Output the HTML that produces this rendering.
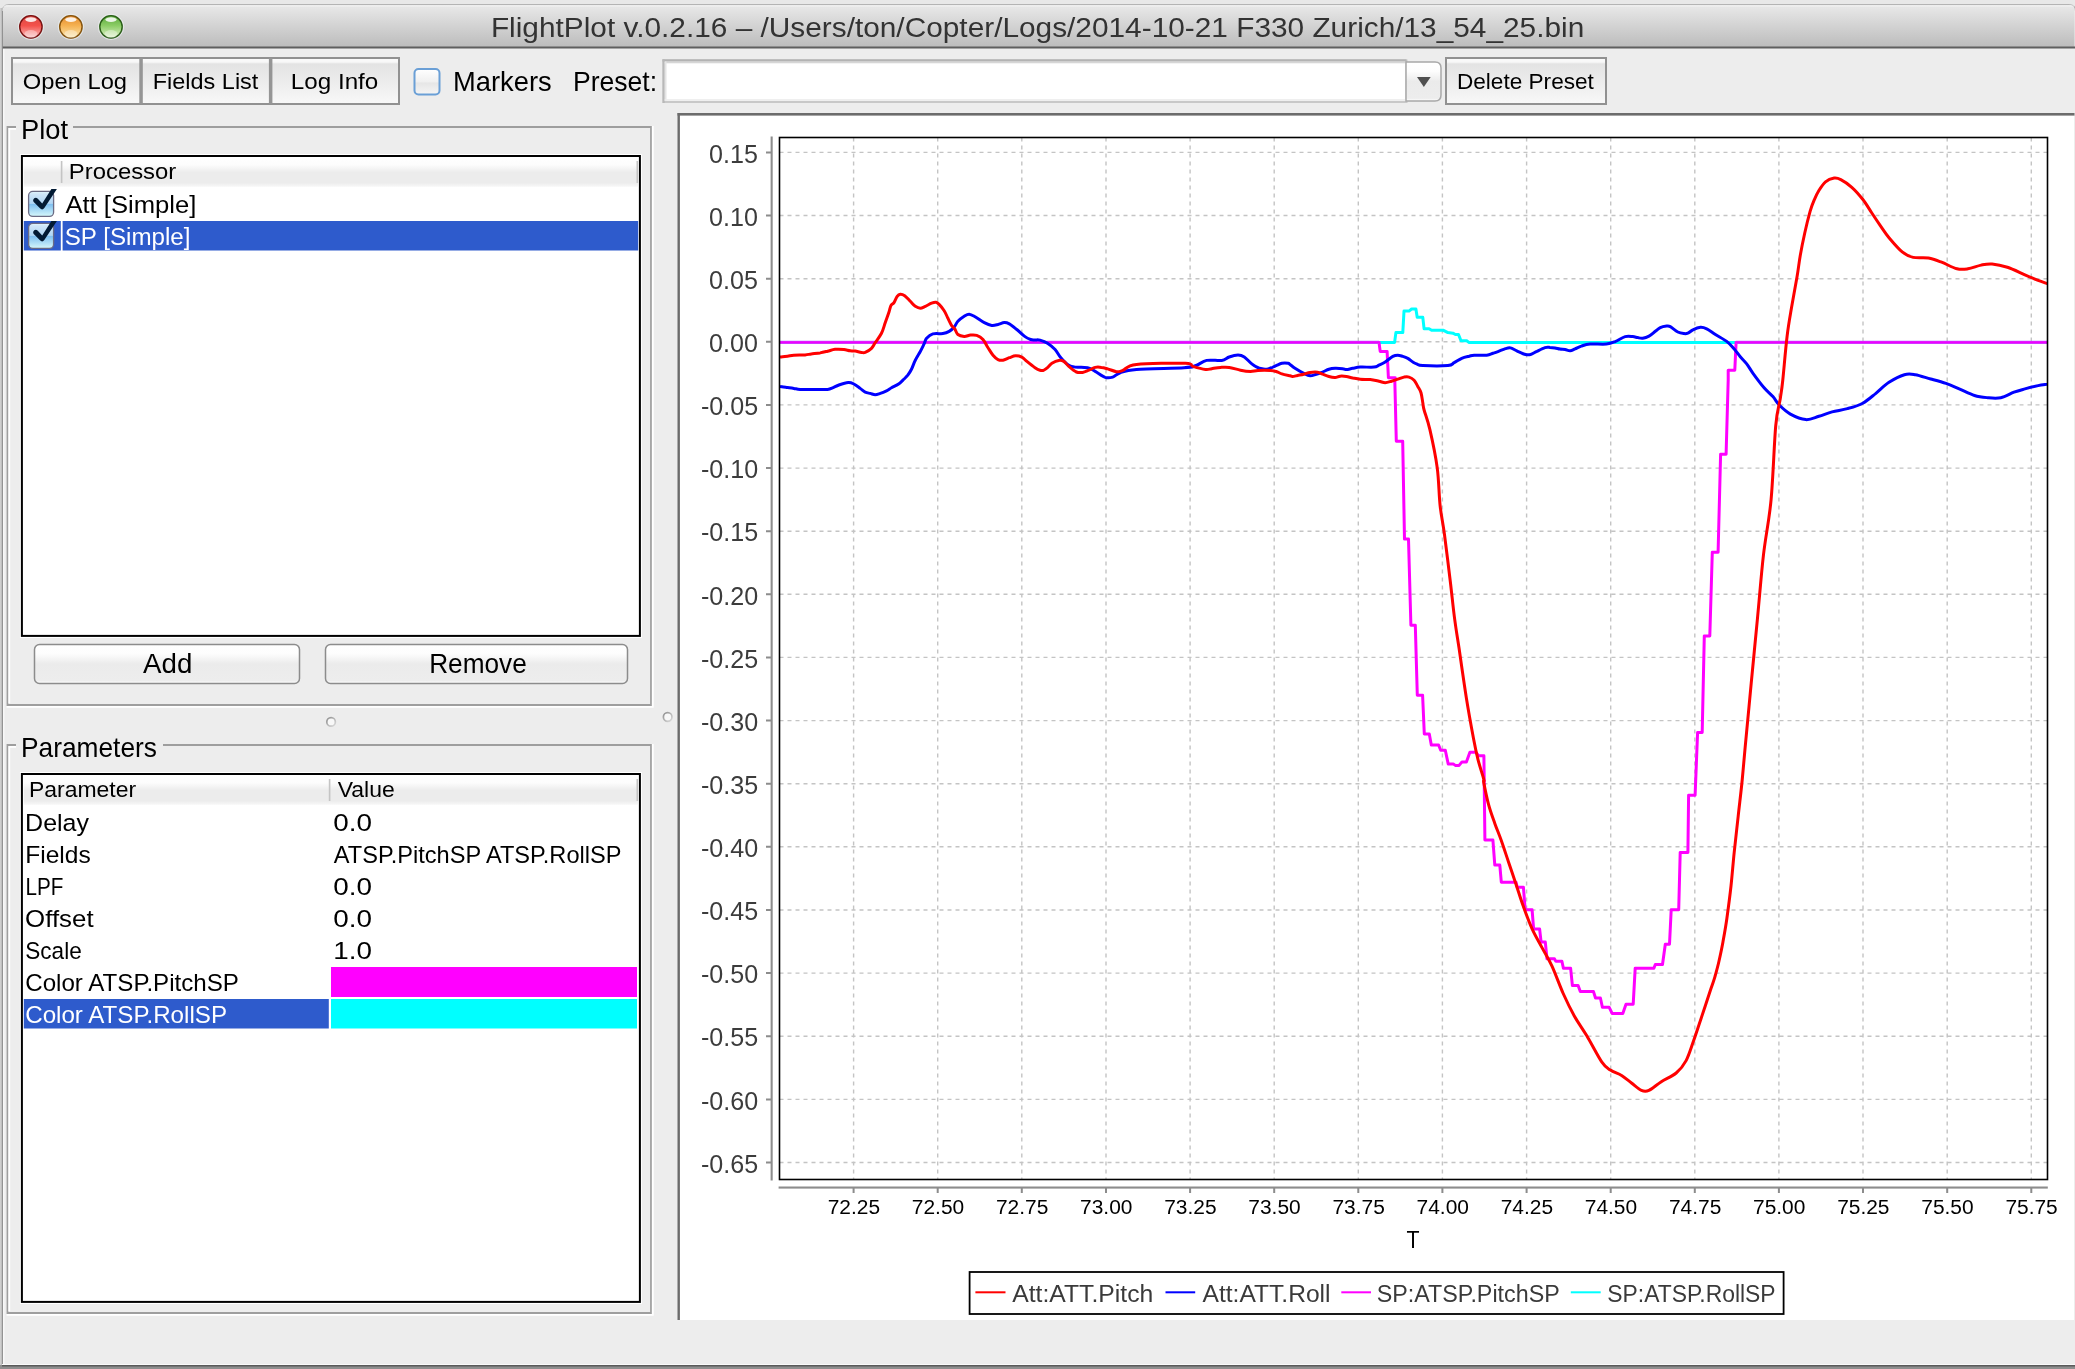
<!DOCTYPE html><html><head><meta charset="utf-8"><style>html,body{margin:0;padding:0;overflow:hidden;background:#e8e8e8}svg{display:block;will-change:transform}text{font-family:"Liberation Sans", sans-serif}</style></head><body>
<svg width="2075" height="1369" viewBox="0 0 2075 1369">
<defs>
<linearGradient id="tb" x1="0" y1="0" x2="0" y2="1"><stop offset="0" stop-color="#e9e9e9"/><stop offset="1" stop-color="#bcbcbc"/></linearGradient>
<linearGradient id="btn" x1="0" y1="0" x2="0" y2="1"><stop offset="0" stop-color="#fcfcfc"/><stop offset="0.09" stop-color="#f7f7f7"/><stop offset="0.13" stop-color="#e3e3e3"/><stop offset="1" stop-color="#f8f8f8"/></linearGradient>
<linearGradient id="lshadow" x1="0" y1="0" x2="1" y2="0"><stop offset="0" stop-color="#d6d6d6"/><stop offset="1" stop-color="#b2b2b2"/></linearGradient>
<linearGradient id="btn2" x1="0" y1="0" x2="0" y2="1"><stop offset="0" stop-color="#ffffff"/><stop offset="0.24" stop-color="#fdfdfd"/><stop offset="0.5" stop-color="#ebebeb"/><stop offset="0.93" stop-color="#ededed"/><stop offset="0.97" stop-color="#f9f9f9"/><stop offset="1" stop-color="#f9f9f9"/></linearGradient>
<linearGradient id="hdr" x1="0" y1="0" x2="0" y2="1"><stop offset="0" stop-color="#ffffff"/><stop offset="0.25" stop-color="#fcfcfc"/><stop offset="0.5" stop-color="#ececec"/><stop offset="0.86" stop-color="#ececec"/><stop offset="1" stop-color="#f8f8f8"/></linearGradient>
<linearGradient id="chk" x1="0" y1="0" x2="0" y2="1"><stop offset="0" stop-color="#ffffff"/><stop offset="0.5" stop-color="#f0f0f0"/><stop offset="0.55" stop-color="#e6e6e6"/><stop offset="1" stop-color="#f5f5f5"/></linearGradient>
<linearGradient id="chkon" x1="0" y1="0" x2="0" y2="1"><stop offset="0" stop-color="#e4f8fc"/><stop offset="0.1" stop-color="#cfe6f8"/><stop offset="0.48" stop-color="#b0d6f4"/><stop offset="0.52" stop-color="#80c0f0"/><stop offset="1" stop-color="#d6f8fb"/></linearGradient>
<radialGradient id="red" cx="0.5" cy="0.4" r="0.6"><stop offset="0" stop-color="#ff6a6a"/><stop offset="0.7" stop-color="#e03c3c"/><stop offset="1" stop-color="#8a1a1a"/></radialGradient>
<radialGradient id="yel" cx="0.5" cy="0.4" r="0.6"><stop offset="0" stop-color="#ffd27a"/><stop offset="0.7" stop-color="#e59a2c"/><stop offset="1" stop-color="#8a5a10"/></radialGradient>
<radialGradient id="grn" cx="0.5" cy="0.4" r="0.6"><stop offset="0" stop-color="#b6ea8e"/><stop offset="0.7" stop-color="#6fbf4a"/><stop offset="1" stop-color="#2f6e1f"/></radialGradient>
</defs>
<rect x="0" y="0" width="2075" height="1369" fill="#e8e8e8"/>
<rect x="0" y="8" width="2.4" height="1361" fill="url(#lshadow)"/>
<rect x="0" y="1365" width="2075" height="4" fill="#8e8e8e"/>
<path d="M2,11 Q2,4.5 9,4.5 L2068,4.5 Q2075,4.5 2075,11 L2075,1366 L2,1366 Z" fill="#ededed"/><path d="M2.5,11 Q2.5,4.5 9,4.5 L2068.5,4.5 Q2075.5,4.5 2075.5,11" fill="none" stroke="#b4b4b4" stroke-width="1.2"/>
<path d="M2.5,11 Q2.5,5 9,5 L2068,5 Q2074.5,5 2074.5,11 L2074.5,47 L2.5,47 Z" fill="url(#tb)"/>
<rect x="3" y="5.5" width="2071" height="1" fill="#f4f4f4" opacity="0.8"/>
<rect x="2" y="46.5" width="2073" height="2" fill="#5f5f5f"/>
<rect x="2.1" y="11" width="0.9" height="1355" fill="#8a8a8a"/>
<rect x="3.2" y="49" width="1.2" height="1315" fill="#fafafa"/>
<rect x="2" y="1364" width="2073" height="1" fill="#fafafa"/>
<rect x="2" y="1365" width="2073" height="1.5" fill="#5a5a5a"/>
<linearGradient id="tlr" x1="0" y1="0" x2="0" y2="1"><stop offset="0" stop-color="#d84a44"/><stop offset="0.45" stop-color="#f4514b"/><stop offset="1" stop-color="#f9c4c4"/></linearGradient>
<circle cx="30.9" cy="26.8" r="12.7" fill="none" stroke="#eef2f2" stroke-width="1" opacity="0.7"/>
<circle cx="30.9" cy="26.8" r="11.2" fill="url(#tlr)" stroke="#7a1212" stroke-width="1.4"/>
<ellipse cx="30.9" cy="34" rx="6.5" ry="4" fill="#fff" opacity="0.35"/>
<ellipse cx="30.9" cy="19.6" rx="5.6" ry="2.4" fill="#fff" opacity="0.85"/>
<linearGradient id="tly" x1="0" y1="0" x2="0" y2="1"><stop offset="0" stop-color="#e48a2e"/><stop offset="0.45" stop-color="#f5b252"/><stop offset="1" stop-color="#fae9b4"/></linearGradient>
<circle cx="70.9" cy="26.8" r="12.7" fill="none" stroke="#eef2f2" stroke-width="1" opacity="0.7"/>
<circle cx="70.9" cy="26.8" r="11.2" fill="url(#tly)" stroke="#86540e" stroke-width="1.4"/>
<ellipse cx="70.9" cy="34" rx="6.5" ry="4" fill="#fff" opacity="0.35"/>
<ellipse cx="70.9" cy="19.6" rx="5.6" ry="2.4" fill="#fff" opacity="0.85"/>
<linearGradient id="tlg" x1="0" y1="0" x2="0" y2="1"><stop offset="0" stop-color="#5aa83a"/><stop offset="0.45" stop-color="#8ccd66"/><stop offset="1" stop-color="#e2f2cc"/></linearGradient>
<circle cx="111" cy="26.8" r="12.7" fill="none" stroke="#eef2f2" stroke-width="1" opacity="0.7"/>
<circle cx="111" cy="26.8" r="11.2" fill="url(#tlg)" stroke="#2a5e18" stroke-width="1.4"/>
<ellipse cx="111" cy="34" rx="6.5" ry="4" fill="#fff" opacity="0.35"/>
<ellipse cx="111" cy="19.6" rx="5.6" ry="2.4" fill="#fff" opacity="0.85"/>
<text x="490.92" y="36.7" font-size="27.3" fill="#333333" textLength="1093.37" lengthAdjust="spacingAndGlyphs">FlightPlot v.0.2.16 – /Users/ton/Copter/Logs/2014-10-21 F330 Zurich/13_54_25.bin</text>
<rect x="12" y="58" width="387" height="46" fill="url(#btn)" stroke="#919191" stroke-width="2"/>
<rect x="139.3" y="58" width="3.5" height="46" fill="#959595"/>
<rect x="268.9" y="58" width="3.5" height="46" fill="#959595"/>
<text x="22.86" y="89.1" font-size="22.9" fill="#000" textLength="104.15" lengthAdjust="spacingAndGlyphs">Open Log</text>
<text x="152.75" y="89.2" font-size="22.9" fill="#000" textLength="105.60" lengthAdjust="spacingAndGlyphs">Fields List</text>
<text x="290.89" y="89.2" font-size="22.9" fill="#000" textLength="87.39" lengthAdjust="spacingAndGlyphs">Log Info</text>
<rect x="414.5" y="69" width="25" height="25.5" rx="4" fill="url(#chk)" stroke="#6a9fd6" stroke-width="2"/>
<text x="453.09" y="90.8" font-size="27.2" fill="#000" textLength="98.60" lengthAdjust="spacingAndGlyphs">Markers</text>
<text x="572.95" y="90.8" font-size="27.2" fill="#000" textLength="84.14" lengthAdjust="spacingAndGlyphs">Preset:</text>
<rect x="663.5" y="60.5" width="743" height="41.5" fill="#fff" stroke="#c8c8c8" stroke-width="2"/><rect x="662.5" y="59.3" width="744" height="2.2" fill="#b3b3b3"/><rect x="662.5" y="59.3" width="2.2" height="43.7" fill="#b8b8b8"/><rect x="664.7" y="61.5" width="741" height="1.8" fill="#d6d6d6"/><rect x="664.7" y="61.5" width="1.8" height="39.5" fill="#e4e4e4"/><rect x="664.7" y="99.2" width="741" height="1.6" fill="#ececec"/>
<path d="M1406,62 L1435,62 Q1441,62 1441,68 L1441,95 Q1441,101 1435,101 L1406,101 Z" fill="url(#btn2)" stroke="#a8a8a8" stroke-width="1.5"/>
<path d="M1417,77 L1430.7,77 L1423.85,87 Z" fill="#505050"/>
<rect x="1446" y="58" width="160" height="46" fill="url(#btn)" stroke="#919191" stroke-width="2"/>
<text x="1456.92" y="89.0" font-size="22.9" fill="#000" textLength="136.97" lengthAdjust="spacingAndGlyphs">Delete Preset</text>
<path d="M16,127 L7.5,127 L7.5,705 L651,705 L651,127 L73,127" fill="none" stroke="#9e9e9e" stroke-width="1.8"/>
<path d="M16,128.8 L9.3,128.8 L9.3,703.2" fill="none" stroke="#fff" stroke-width="1.8"/>
<path d="M6.6,706.8 L652.8,706.8 L652.8,126.1" fill="none" stroke="#fff" stroke-width="1.8"/>
<text x="21.06" y="138.8" font-size="26.8" fill="#000" textLength="47.03" lengthAdjust="spacingAndGlyphs">Plot</text>
<path d="M16,745 L7.5,745 L7.5,1313 L651,1313 L651,745 L163,745" fill="none" stroke="#9e9e9e" stroke-width="1.8"/>
<path d="M16,746.8 L9.3,746.8 L9.3,1311.2" fill="none" stroke="#fff" stroke-width="1.8"/>
<path d="M6.6,1314.8 L652.8,1314.8 L652.8,744.1" fill="none" stroke="#fff" stroke-width="1.8"/>
<text x="21.07" y="757.0" font-size="27.2" fill="#000" textLength="135.85" lengthAdjust="spacingAndGlyphs">Parameters</text>
<rect x="20.4" y="154.5" width="621" height="483" fill="none" stroke="#fff" stroke-width="1"/><rect x="21.9" y="156" width="618" height="479.9" fill="#fff" stroke="#000" stroke-width="2"/>
<rect x="23.8" y="157.8" width="614.4" height="29" fill="url(#hdr)"/>
<rect x="60.8" y="161" width="1.6" height="22" fill="#c4c4c4"/>
<rect x="636.5" y="161" width="1.6" height="22" fill="#c4c4c4"/>
<text x="68.87" y="179.0" font-size="22.4" fill="#000" textLength="107.38" lengthAdjust="spacingAndGlyphs">Processor</text>
<rect x="28.6" y="191.4" width="25" height="25" rx="4.2" fill="url(#chkon)" stroke="#6b6b84" stroke-width="1.3"/>
<path d="M51.4,189.0 L56.9,189.0 L44.5,207.8 Q42.3,210.8 40,208.3 L33.5,201.8 Q32.3,199.8 34.2,198.3 Q36,197.0 37.8,198.7 L42.2,203.5 Z" fill="#021a33"/>
<text x="65.40" y="212.9" font-size="24.6" fill="#000" textLength="131.02" lengthAdjust="spacingAndGlyphs">Att [Simple]</text>
<rect x="23.8" y="221" width="37" height="29.5" fill="#2e5bcc"/>
<rect x="62.6" y="221" width="575.6" height="29.5" fill="#2e5bcc"/>
<rect x="28.6" y="223.4" width="25" height="25" rx="4.2" fill="url(#chkon)" stroke="#6b6b84" stroke-width="1.3"/>
<path d="M51.4,221.0 L56.9,221.0 L44.5,239.8 Q42.3,242.8 40,240.3 L33.5,233.8 Q32.3,231.8 34.2,230.3 Q36,229.0 37.8,230.7 L42.2,235.5 Z" fill="#021a33"/>
<text x="64.72" y="244.9" font-size="24.6" fill="#fff" textLength="125.79" lengthAdjust="spacingAndGlyphs">SP [Simple]</text>
<rect x="34.5" y="644.5" width="265" height="39" rx="5" fill="url(#btn2)" stroke="#8c8c8c" stroke-width="1.5"/>
<rect x="325.5" y="644.5" width="302" height="39" rx="5" fill="url(#btn2)" stroke="#8c8c8c" stroke-width="1.5"/>
<text x="143.00" y="672.8" font-size="28.4" fill="#000" textLength="49.28" lengthAdjust="spacingAndGlyphs">Add</text>
<text x="429.15" y="673.0" font-size="28.4" fill="#000" textLength="97.61" lengthAdjust="spacingAndGlyphs">Remove</text>
<linearGradient id="dotst" x1="0" y1="0" x2="1" y2="1"><stop offset="0" stop-color="#8e8e8e"/><stop offset="1" stop-color="#dcdcdc"/></linearGradient>
<circle cx="331.1" cy="721.9" r="4.3" fill="#f8f8f8" stroke="url(#dotst)" stroke-width="1.7"/>
<circle cx="667.7" cy="717" r="4.3" fill="#f8f8f8" stroke="url(#dotst)" stroke-width="1.7"/>
<rect x="20.4" y="772.5" width="621" height="531" fill="none" stroke="#fff" stroke-width="1"/><rect x="21.9" y="774" width="618" height="527.9" fill="#fff" stroke="#000" stroke-width="2"/>
<rect x="23.8" y="775.8" width="614.4" height="29" fill="url(#hdr)"/>
<rect x="328.8" y="779" width="1.6" height="22" fill="#c4c4c4"/>
<rect x="636.5" y="779" width="1.6" height="22" fill="#c4c4c4"/>
<text x="28.97" y="796.8" font-size="21.5" fill="#000" textLength="107.13" lengthAdjust="spacingAndGlyphs">Parameter</text>
<text x="337.70" y="796.6" font-size="21.5" fill="#000" textLength="57.03" lengthAdjust="spacingAndGlyphs">Value</text>
<text x="25.14" y="830.7" font-size="24.3" fill="#000" textLength="63.89" lengthAdjust="spacingAndGlyphs">Delay</text>
<text x="333.15" y="830.7" font-size="24.3" fill="#000" textLength="38.74" lengthAdjust="spacingAndGlyphs">0.0</text>
<text x="25.18" y="862.7" font-size="24.3" fill="#000" textLength="65.54" lengthAdjust="spacingAndGlyphs">Fields</text>
<text x="333.80" y="862.7" font-size="24.3" fill="#000" textLength="287.68" lengthAdjust="spacingAndGlyphs">ATSP.PitchSP ATSP.RollSP</text>
<text x="25.50" y="894.7" font-size="24.3" fill="#000" textLength="37.88" lengthAdjust="spacingAndGlyphs">LPF</text>
<text x="333.15" y="894.7" font-size="24.3" fill="#000" textLength="38.74" lengthAdjust="spacingAndGlyphs">0.0</text>
<text x="25.14" y="926.7" font-size="24.3" fill="#000" textLength="68.46" lengthAdjust="spacingAndGlyphs">Offset</text>
<text x="333.15" y="926.7" font-size="24.3" fill="#000" textLength="38.74" lengthAdjust="spacingAndGlyphs">0.0</text>
<text x="25.27" y="958.7" font-size="24.3" fill="#000" textLength="56.45" lengthAdjust="spacingAndGlyphs">Scale</text>
<text x="333.21" y="958.7" font-size="24.3" fill="#000" textLength="38.68" lengthAdjust="spacingAndGlyphs">1.0</text>
<text x="25.21" y="990.7" font-size="24.3" fill="#000" textLength="213.76" lengthAdjust="spacingAndGlyphs">Color ATSP.PitchSP</text>
<rect x="23.8" y="999" width="305" height="29.5" fill="#2e5bcc"/>
<text x="25.21" y="1022.7" font-size="24.3" fill="#fff" textLength="201.80" lengthAdjust="spacingAndGlyphs">Color ATSP.RollSP</text>
<rect x="331" y="967" width="306" height="30" fill="#ff00ff"/>
<rect x="331" y="999" width="306" height="29.5" fill="#00ffff"/>
<rect x="680" y="115" width="1394" height="1205" fill="#fff"/>
<rect x="677.5" y="113" width="1397" height="2.6" fill="#6c6c6c"/>
<rect x="677.5" y="113" width="2.4" height="1207" fill="#6c6c6c"/>
<path d="M779.5,152.4 H2047.5 M779.5,215.5 H2047.5 M779.5,278.7 H2047.5 M779.5,341.8 H2047.5 M779.5,404.9 H2047.5 M779.5,468.1 H2047.5 M779.5,531.2 H2047.5 M779.5,594.3 H2047.5 M779.5,657.4 H2047.5 M779.5,720.6 H2047.5 M779.5,783.7 H2047.5 M779.5,846.8 H2047.5 M779.5,910.0 H2047.5 M779.5,973.1 H2047.5 M779.5,1036.2 H2047.5 M779.5,1099.4 H2047.5 M779.5,1162.5 H2047.5 M853.6,137.5 V1179.5 M937.7,137.5 V1179.5 M1021.8,137.5 V1179.5 M1106.0,137.5 V1179.5 M1190.1,137.5 V1179.5 M1274.2,137.5 V1179.5 M1358.3,137.5 V1179.5 M1442.4,137.5 V1179.5 M1526.6,137.5 V1179.5 M1610.7,137.5 V1179.5 M1694.8,137.5 V1179.5 M1778.9,137.5 V1179.5 M1863.0,137.5 V1179.5 M1947.2,137.5 V1179.5 M2031.3,137.5 V1179.5" stroke="#c4c4c4" stroke-width="1.4" stroke-dasharray="4,4" fill="none"/>
<rect x="770.6" y="136.5" width="2.1" height="1044" fill="#8c8c8c"/>
<rect x="778.6" y="1186.5" width="1269.2" height="2.1" fill="#8c8c8c"/>
<path d="M766,152.4 H771 M766,215.5 H771 M766,278.7 H771 M766,341.8 H771 M766,404.9 H771 M766,468.1 H771 M766,531.2 H771 M766,594.3 H771 M766,657.4 H771 M766,720.6 H771 M766,783.7 H771 M766,846.8 H771 M766,910.0 H771 M766,973.1 H771 M766,1036.2 H771 M766,1099.4 H771 M766,1162.5 H771 M853.6,1188 V1193 M937.7,1188 V1193 M1021.8,1188 V1193 M1106.0,1188 V1193 M1190.1,1188 V1193 M1274.2,1188 V1193 M1358.3,1188 V1193 M1442.4,1188 V1193 M1526.6,1188 V1193 M1610.7,1188 V1193 M1694.8,1188 V1193 M1778.9,1188 V1193 M1863.0,1188 V1193 M1947.2,1188 V1193 M2031.3,1188 V1193" stroke="#8c8c8c" stroke-width="2" fill="none"/>
<text x="709.00" y="162.6" font-size="25.0" fill="#3c3c3c" textLength="48.88" lengthAdjust="spacingAndGlyphs">0.15</text>
<text x="709.00" y="225.7" font-size="25.0" fill="#3c3c3c" textLength="48.88" lengthAdjust="spacingAndGlyphs">0.10</text>
<text x="709.00" y="288.9" font-size="25.0" fill="#3c3c3c" textLength="48.88" lengthAdjust="spacingAndGlyphs">0.05</text>
<text x="709.00" y="352.0" font-size="25.0" fill="#3c3c3c" textLength="48.88" lengthAdjust="spacingAndGlyphs">0.00</text>
<text x="701.00" y="415.1" font-size="25.0" fill="#3c3c3c" textLength="57.19" lengthAdjust="spacingAndGlyphs">-0.05</text>
<text x="701.00" y="478.3" font-size="25.0" fill="#3c3c3c" textLength="57.19" lengthAdjust="spacingAndGlyphs">-0.10</text>
<text x="701.00" y="541.4" font-size="25.0" fill="#3c3c3c" textLength="57.19" lengthAdjust="spacingAndGlyphs">-0.15</text>
<text x="701.00" y="604.5" font-size="25.0" fill="#3c3c3c" textLength="57.19" lengthAdjust="spacingAndGlyphs">-0.20</text>
<text x="701.00" y="667.6" font-size="25.0" fill="#3c3c3c" textLength="57.19" lengthAdjust="spacingAndGlyphs">-0.25</text>
<text x="701.00" y="730.8" font-size="25.0" fill="#3c3c3c" textLength="57.19" lengthAdjust="spacingAndGlyphs">-0.30</text>
<text x="701.00" y="793.9" font-size="25.0" fill="#3c3c3c" textLength="57.19" lengthAdjust="spacingAndGlyphs">-0.35</text>
<text x="701.00" y="857.0" font-size="25.0" fill="#3c3c3c" textLength="57.19" lengthAdjust="spacingAndGlyphs">-0.40</text>
<text x="701.00" y="920.2" font-size="25.0" fill="#3c3c3c" textLength="57.19" lengthAdjust="spacingAndGlyphs">-0.45</text>
<text x="701.00" y="983.3" font-size="25.0" fill="#3c3c3c" textLength="57.19" lengthAdjust="spacingAndGlyphs">-0.50</text>
<text x="701.00" y="1046.4" font-size="25.0" fill="#3c3c3c" textLength="57.19" lengthAdjust="spacingAndGlyphs">-0.55</text>
<text x="701.00" y="1109.6" font-size="25.0" fill="#3c3c3c" textLength="57.19" lengthAdjust="spacingAndGlyphs">-0.60</text>
<text x="701.00" y="1172.7" font-size="25.0" fill="#3c3c3c" textLength="57.19" lengthAdjust="spacingAndGlyphs">-0.65</text>
<text x="827.71" y="1214.1" font-size="21.1" fill="#000" textLength="52.38" lengthAdjust="spacingAndGlyphs">72.25</text>
<text x="911.83" y="1214.1" font-size="21.1" fill="#000" textLength="52.38" lengthAdjust="spacingAndGlyphs">72.50</text>
<text x="995.95" y="1214.1" font-size="21.1" fill="#000" textLength="52.38" lengthAdjust="spacingAndGlyphs">72.75</text>
<text x="1080.07" y="1214.1" font-size="21.1" fill="#000" textLength="52.38" lengthAdjust="spacingAndGlyphs">73.00</text>
<text x="1164.19" y="1214.1" font-size="21.1" fill="#000" textLength="52.38" lengthAdjust="spacingAndGlyphs">73.25</text>
<text x="1248.31" y="1214.1" font-size="21.1" fill="#000" textLength="52.38" lengthAdjust="spacingAndGlyphs">73.50</text>
<text x="1332.43" y="1214.1" font-size="21.1" fill="#000" textLength="52.38" lengthAdjust="spacingAndGlyphs">73.75</text>
<text x="1416.55" y="1214.1" font-size="21.1" fill="#000" textLength="52.38" lengthAdjust="spacingAndGlyphs">74.00</text>
<text x="1500.67" y="1214.1" font-size="21.1" fill="#000" textLength="52.38" lengthAdjust="spacingAndGlyphs">74.25</text>
<text x="1584.79" y="1214.1" font-size="21.1" fill="#000" textLength="52.38" lengthAdjust="spacingAndGlyphs">74.50</text>
<text x="1668.91" y="1214.1" font-size="21.1" fill="#000" textLength="52.38" lengthAdjust="spacingAndGlyphs">74.75</text>
<text x="1753.03" y="1214.1" font-size="21.1" fill="#000" textLength="52.38" lengthAdjust="spacingAndGlyphs">75.00</text>
<text x="1837.15" y="1214.1" font-size="21.1" fill="#000" textLength="52.38" lengthAdjust="spacingAndGlyphs">75.25</text>
<text x="1921.27" y="1214.1" font-size="21.1" fill="#000" textLength="52.38" lengthAdjust="spacingAndGlyphs">75.50</text>
<text x="2005.39" y="1214.1" font-size="21.1" fill="#000" textLength="52.38" lengthAdjust="spacingAndGlyphs">75.75</text>
<text x="1406.50" y="1247.6" font-size="24.6" fill="#000" textLength="13.03" lengthAdjust="spacingAndGlyphs">T</text>
<clipPath id="pc"><rect x="779.5" y="137.5" width="1268.0" height="1042.0"/></clipPath>
<g clip-path="url(#pc)" fill="none" stroke-width="3" stroke-linejoin="round">
<polyline points="779.5,342.4 1379.0,342.4 1394.6,342.4 1395.9,332.6 1402.8,332.6 1404.0,311.1 1409.0,311.1 1411.6,309.0 1415.9,309.0 1417.2,317.3 1422.8,317.3 1424.1,328.8 1429.1,328.8 1431.6,330.3 1443.5,330.3 1447.9,332.6 1452.9,333.2 1455.4,334.5 1458.5,334.5 1461.0,340.7 1466.7,340.7 1469.2,342.6 2047.5,342.4" stroke="#00ffff"/>
<polyline points="779.5,342.4 1379.0,342.4 1380.2,351.4 1387.1,351.4 1388.4,377.7 1395.3,377.7 1394.8,380.0 1396.3,441.3 1402.7,441.3 1404.5,539.1 1408.5,539.1 1410.9,625.3 1415.3,625.3 1417.3,695.3 1422.6,695.3 1424.3,733.9 1429.3,733.9 1431.3,745.0 1438.6,745.0 1440.7,750.2 1445.3,750.2 1448.2,763.9 1453.2,763.9 1455.3,765.4 1459.1,765.4 1462.0,761.9 1466.4,761.9 1469.9,752.3 1475.7,752.3 1478.6,755.8 1483.9,755.8 1484.9,840.0 1492.9,840.0 1494.8,865.1 1499.8,865.1 1501.3,882.2 1516.0,882.2 1517.2,887.2 1523.4,887.2 1525.2,909.8 1532.1,909.8 1533.6,928.9 1539.6,928.9 1541.1,942.1 1545.3,942.1 1547.0,958.8 1554.5,958.8 1555.7,961.2 1561.9,961.2 1563.4,968.2 1570.6,968.2 1572.4,985.6 1578.1,985.6 1580.3,991.6 1593.5,991.6 1595.5,998.0 1600.4,998.0 1602.4,1007.2 1609.1,1007.2 1612.1,1013.4 1622.8,1013.4 1626.0,1004.2 1633.2,1004.2 1635.2,968.2 1653.9,968.2 1655.3,964.5 1662.5,964.5 1665.3,944.3 1669.5,944.3 1671.2,909.8 1678.7,909.8 1680.2,852.4 1687.9,852.4 1688.6,795.3 1689.0,795.3 1695.1,795.3 1697.6,732.5 1702.2,732.5 1704.3,635.9 1709.8,635.9 1712.3,552.3 1718.1,552.3 1720.6,454.2 1726.1,454.2 1728.2,380.0 1728.2,370.2 1734.8,370.2 1736.1,342.4 2047.5,342.4" stroke="#ff00ff"/>
<path d="M779.5,342.4 H1379 M1736.1,342.4 H2047.5" stroke="#b36cff" stroke-width="3.4"/>
<path d="M779.5,342.4 H1379 M1736.1,342.4 H2047.5" stroke="#f000ff" stroke-width="2.2"/>
<path d="M780.0,386.5 C781.2,386.7 785.2,387.2 787.5,387.5 C789.8,387.8 791.7,388.1 793.8,388.4 C795.9,388.7 797.0,389.2 800.1,389.4 C803.2,389.6 808.0,389.4 812.6,389.4 C817.2,389.4 824.3,389.7 827.6,389.4 C830.9,389.1 830.7,388.5 832.6,387.8 C834.5,387.1 836.3,385.9 838.9,385.0 C841.5,384.1 845.8,382.7 848.3,382.5 C850.8,382.3 851.9,383.0 853.9,384.0 C855.9,385.0 858.3,387.0 860.2,388.4 C862.1,389.8 863.5,391.3 865.2,392.1 C866.9,392.9 868.5,393.0 870.2,393.4 C871.9,393.8 873.5,394.7 875.2,394.7 C876.9,394.7 878.4,394.0 880.3,393.4 C882.2,392.8 884.6,391.8 886.5,390.9 C888.4,390.0 889.4,389.0 891.5,387.8 C893.6,386.6 896.9,385.2 899.0,383.7 C901.1,382.2 902.6,380.4 904.1,379.0 C905.6,377.6 906.5,376.9 907.8,375.2 C909.0,373.5 910.4,371.5 911.6,369.0 C912.9,366.5 913.8,363.1 915.3,360.2 C916.8,357.3 918.8,354.1 920.3,351.4 C921.8,348.7 923.0,346.1 924.1,343.9 C925.2,341.7 925.1,340.0 926.6,338.3 C928.1,336.6 930.2,334.7 932.9,333.9 C935.6,333.1 940.2,334.0 942.9,333.6 C945.6,333.2 947.3,332.5 949.2,331.4 C951.1,330.3 952.8,328.7 954.2,327.0 C955.7,325.3 956.2,323.1 957.9,321.3 C959.6,319.5 962.3,317.5 964.2,316.3 C966.1,315.1 967.3,314.1 969.2,314.2 C971.1,314.3 973.0,315.6 975.5,317.0 C978.0,318.4 981.6,321.2 984.3,322.6 C987.0,324.0 989.5,325.1 991.8,325.4 C994.1,325.7 995.9,325.0 998.0,324.5 C1000.1,324.0 1002.4,322.7 1004.3,322.6 C1006.2,322.5 1007.2,322.8 1009.3,323.9 C1011.4,325.0 1014.3,327.5 1016.8,329.5 C1019.3,331.5 1022.0,334.4 1024.3,336.1 C1026.6,337.8 1028.8,338.9 1030.6,339.5 C1032.4,340.1 1033.4,339.8 1035.0,339.9 C1036.6,340.0 1037.9,339.6 1040.0,340.1 C1042.1,340.7 1045.0,341.6 1047.5,343.2 C1050.0,344.8 1052.8,347.0 1055.1,349.5 C1057.4,352.0 1058.6,355.5 1061.3,358.3 C1064.0,361.1 1066.9,364.8 1071.3,366.4 C1075.7,368.0 1083.6,366.9 1087.6,367.7 C1091.6,368.5 1092.3,369.8 1095.2,371.4 C1098.1,373.0 1102.3,376.4 1105.2,377.4 C1108.1,378.3 1110.2,377.9 1112.7,377.1 C1115.2,376.3 1116.2,374.0 1120.2,372.7 C1124.2,371.4 1125.8,370.3 1136.5,369.5 C1147.2,368.7 1174.3,368.3 1184.1,367.7 C1193.9,367.1 1191.6,367.0 1195.4,365.8 C1199.2,364.6 1202.3,361.3 1206.7,360.4 C1211.1,359.5 1218.0,361.0 1221.7,360.4 C1225.5,359.8 1226.5,357.9 1229.2,357.0 C1231.9,356.1 1235.5,355.1 1238.0,355.1 C1240.5,355.1 1242.0,355.5 1244.3,357.0 C1246.6,358.5 1249.3,362.0 1251.8,363.9 C1254.3,365.8 1256.6,367.5 1259.3,368.3 C1262.0,369.1 1265.4,369.3 1268.1,368.9 C1270.8,368.5 1273.3,366.7 1275.6,365.8 C1277.9,364.9 1279.8,363.7 1281.9,363.3 C1284.0,362.9 1286.8,363.1 1288.1,363.3 C1289.4,363.5 1288.8,363.7 1290.0,364.5 C1291.2,365.3 1292.7,366.8 1295.0,368.3 C1297.3,369.8 1301.3,372.1 1303.8,373.3 C1306.3,374.6 1308.0,375.7 1310.1,375.8 C1312.2,375.9 1314.2,374.8 1316.3,374.2 C1318.4,373.6 1320.5,372.9 1322.6,372.1 C1324.7,371.3 1326.8,369.8 1328.9,369.2 C1331.0,368.6 1332.8,368.4 1335.1,368.3 C1337.4,368.2 1340.7,368.5 1342.6,368.7 C1344.5,368.9 1344.7,369.7 1346.4,369.6 C1348.1,369.5 1350.4,368.7 1352.7,368.3 C1355.0,367.9 1356.7,367.3 1360.2,367.1 C1363.8,366.9 1370.9,367.4 1374.0,367.1 C1377.1,366.8 1377.1,366.1 1379.0,365.2 C1380.9,364.3 1382.9,363.5 1385.2,362.0 C1387.5,360.5 1390.7,357.5 1392.8,356.4 C1394.9,355.3 1396.1,355.2 1397.8,355.2 C1399.5,355.2 1401.1,355.9 1402.8,356.4 C1404.5,356.9 1406.1,357.4 1407.8,358.3 C1409.5,359.2 1411.3,361.1 1412.8,362.0 C1414.3,362.9 1414.9,363.3 1416.6,363.9 C1418.3,364.5 1417.6,365.3 1422.8,365.6 C1428.0,365.9 1442.7,366.1 1447.9,365.6 C1453.1,365.1 1451.9,363.9 1454.2,362.7 C1456.5,361.5 1459.2,359.4 1461.7,358.3 C1464.2,357.2 1467.1,356.7 1469.2,356.2 C1471.3,355.7 1471.3,355.4 1474.2,355.2 C1477.1,355.0 1483.6,355.5 1486.7,355.2 C1489.8,354.9 1491.1,353.9 1493.0,353.3 C1494.9,352.7 1495.9,352.4 1498.0,351.6 C1500.1,350.8 1503.4,349.2 1505.5,348.6 C1507.6,348.0 1508.6,347.5 1510.5,347.9 C1512.4,348.3 1514.3,349.7 1516.8,350.8 C1519.3,351.9 1523.3,353.9 1525.6,354.5 C1527.9,355.1 1528.7,355.0 1530.6,354.5 C1532.5,354.0 1534.5,352.5 1536.9,351.4 C1539.3,350.2 1542.8,348.3 1545.0,347.6 C1547.2,346.9 1548.3,347.3 1550.0,347.4 C1551.7,347.4 1553.3,347.6 1555.0,347.9 C1556.7,348.2 1558.3,348.8 1560.0,349.1 C1561.7,349.4 1563.4,349.2 1565.1,349.5 C1566.8,349.8 1568.4,350.9 1570.1,350.8 C1571.8,350.7 1573.2,349.7 1575.1,348.9 C1577.0,348.1 1578.8,346.9 1581.3,346.1 C1583.8,345.3 1585.9,344.4 1590.1,344.1 C1594.3,343.8 1602.2,344.5 1606.4,344.1 C1610.6,343.7 1612.1,342.9 1615.2,341.6 C1618.3,340.4 1622.3,337.4 1625.2,336.6 C1628.1,335.8 1630.6,336.4 1632.7,336.6 C1634.8,336.8 1636.0,337.3 1637.7,337.6 C1639.4,337.9 1640.8,338.4 1642.7,338.2 C1644.6,337.9 1646.9,337.2 1649.0,336.1 C1651.1,335.0 1653.4,332.7 1655.3,331.3 C1657.2,329.9 1658.4,328.5 1660.3,327.6 C1662.2,326.7 1664.9,326.3 1666.6,326.1 C1668.3,325.9 1668.4,325.6 1670.3,326.6 C1672.2,327.6 1675.5,330.8 1677.8,332.0 C1680.1,333.2 1682.4,333.4 1684.1,333.6 C1685.8,333.8 1686.4,333.8 1687.9,333.2 C1689.4,332.6 1690.8,330.8 1692.9,329.8 C1695.0,328.8 1698.1,327.5 1700.4,327.3 C1702.7,327.1 1704.2,327.6 1706.7,328.8 C1709.2,330.0 1712.1,332.4 1715.4,334.5 C1718.7,336.6 1723.6,339.0 1726.7,341.4 C1729.8,343.8 1731.9,346.3 1734.2,348.9 C1736.5,351.5 1738.4,354.5 1740.5,357.0 C1742.6,359.5 1744.6,361.2 1746.7,363.9 C1748.8,366.6 1750.1,369.3 1753.0,373.3 C1755.9,377.3 1760.8,383.9 1764.1,387.8 C1767.4,391.7 1770.3,393.7 1772.9,396.6 C1775.5,399.5 1776.6,402.4 1779.5,405.3 C1782.4,408.2 1786.0,411.7 1790.4,414.1 C1794.8,416.5 1801.0,419.2 1805.8,419.6 C1810.5,420.0 1814.5,417.6 1818.9,416.3 C1823.3,415.0 1827.3,413.2 1832.1,411.9 C1836.8,410.6 1842.3,410.1 1847.4,408.6 C1852.5,407.2 1858.0,405.8 1862.7,403.2 C1867.5,400.6 1871.5,396.8 1875.9,393.3 C1880.3,389.8 1884.2,385.4 1889.0,382.3 C1893.8,379.2 1900.0,376.0 1904.4,374.7 C1908.8,373.4 1910.9,374.0 1915.3,374.7 C1919.7,375.4 1925.6,377.6 1930.7,379.0 C1935.8,380.4 1941.2,381.8 1946.0,383.4 C1950.8,385.0 1954.5,386.9 1959.2,388.9 C1964.0,390.9 1969.8,394.0 1974.5,395.5 C1979.2,397.0 1983.3,397.3 1987.7,397.7 C1992.1,398.1 1996.4,398.6 2000.8,397.7 C2005.2,396.8 2010.0,393.7 2014.0,392.2 C2018.0,390.7 2020.9,390.0 2024.9,388.9 C2028.9,387.8 2034.3,386.4 2038.1,385.6 C2041.9,384.8 2045.9,384.4 2047.5,384.1" stroke="#0000ff"/>
<path d="M780.0,357.1 C781.2,357.0 785.2,356.5 787.5,356.2 C789.8,355.9 790.9,355.4 793.8,355.2 C796.7,355.0 802.2,355.1 805.1,354.9 C808.0,354.7 808.8,354.2 811.3,353.9 C813.8,353.6 817.4,353.3 820.1,352.9 C822.8,352.4 825.1,351.8 827.6,351.2 C830.1,350.6 832.4,349.6 835.1,349.3 C837.8,349.0 841.4,349.2 843.9,349.5 C846.4,349.8 848.3,350.6 850.2,350.8 C852.1,351.1 853.3,350.7 855.2,351.0 C857.1,351.3 859.8,352.2 861.5,352.4 C863.2,352.6 863.5,353.1 865.2,352.4 C866.9,351.7 869.8,349.9 871.5,348.3 C873.2,346.7 873.5,345.2 875.2,342.7 C876.9,340.2 879.8,336.6 881.5,333.3 C883.2,330.0 884.0,326.2 885.3,322.6 C886.5,319.1 888.1,314.8 889.0,312.0 C889.9,309.2 890.1,307.3 890.9,305.7 C891.7,304.1 893.0,304.2 894.0,302.6 C895.0,301.0 896.2,297.7 897.2,296.3 C898.2,294.9 899.0,294.3 900.3,294.2 C901.5,294.1 903.0,294.5 904.7,295.7 C906.4,296.9 908.5,299.5 910.3,301.3 C912.1,303.1 913.6,305.2 915.3,306.3 C917.0,307.4 918.6,308.2 920.3,308.2 C922.0,308.2 923.5,307.1 925.4,306.3 C927.3,305.5 929.8,303.9 931.6,303.2 C933.4,302.5 934.8,302.1 936.0,302.3 C937.2,302.5 937.7,303.0 939.1,304.4 C940.5,305.8 942.7,308.4 944.2,310.7 C945.7,313.0 946.6,315.7 947.9,318.2 C949.1,320.7 950.6,323.9 951.7,325.7 C952.9,327.5 953.8,327.4 954.8,328.9 C955.8,330.4 956.3,333.2 957.9,334.5 C959.5,335.8 962.1,336.3 964.2,336.4 C966.3,336.5 968.4,335.3 970.5,335.1 C972.6,334.9 974.6,334.7 976.7,335.4 C978.8,336.1 981.1,337.4 983.0,339.5 C984.9,341.6 986.3,345.1 988.0,347.7 C989.7,350.3 991.3,353.2 993.0,355.2 C994.7,357.2 996.3,358.8 998.0,359.6 C999.7,360.4 1001.1,360.5 1003.0,360.2 C1004.9,359.9 1007.2,358.4 1009.3,357.7 C1011.4,357.0 1013.5,355.9 1015.6,355.8 C1017.7,355.7 1019.9,356.2 1021.8,357.1 C1023.7,358.0 1024.7,359.6 1026.9,361.4 C1029.1,363.2 1032.8,366.2 1035.0,367.7 C1037.2,369.2 1038.5,369.8 1040.0,370.2 C1041.5,370.6 1042.5,370.6 1043.8,370.2 C1045.0,369.8 1046.2,368.8 1047.5,367.7 C1048.8,366.6 1050.0,364.5 1051.9,363.3 C1053.8,362.1 1056.8,360.7 1058.8,360.4 C1060.8,360.1 1062.1,360.4 1063.8,361.4 C1065.5,362.4 1066.7,364.6 1068.8,366.4 C1070.9,368.2 1074.1,371.0 1076.4,372.0 C1078.7,373.0 1080.5,372.7 1082.6,372.4 C1084.7,372.1 1086.8,371.0 1088.9,370.2 C1091.0,369.4 1093.1,367.9 1095.2,367.4 C1097.3,366.9 1099.3,367.1 1101.4,367.4 C1103.5,367.6 1105.2,368.2 1107.7,368.9 C1110.2,369.6 1114.0,371.4 1116.5,371.7 C1119.0,371.9 1119.4,371.6 1122.7,370.4 C1126.0,369.2 1126.0,365.7 1136.5,364.5 C1147.0,363.3 1176.0,363.0 1185.4,363.3 C1194.8,363.6 1189.6,365.4 1192.9,366.4 C1196.2,367.4 1202.3,369.1 1205.4,369.5 C1208.5,369.9 1209.2,369.1 1211.7,368.7 C1214.2,368.3 1217.6,367.6 1220.5,367.4 C1223.4,367.2 1225.9,366.9 1229.2,367.4 C1232.5,367.9 1237.0,369.5 1240.5,370.2 C1244.0,370.9 1247.6,371.4 1250.5,371.4 C1253.4,371.4 1254.7,370.6 1258.0,370.4 C1261.3,370.2 1267.5,370.2 1270.6,370.4 C1273.7,370.6 1274.9,371.1 1276.8,371.7 C1278.7,372.3 1279.7,373.2 1281.9,373.9 C1284.1,374.6 1288.2,375.4 1290.0,375.8 C1291.8,376.2 1291.2,376.6 1292.5,376.5 C1293.8,376.4 1295.6,375.9 1297.5,375.5 C1299.4,375.1 1301.7,374.7 1303.8,374.2 C1305.9,373.7 1307.8,372.7 1310.1,372.4 C1312.4,372.1 1315.5,371.9 1317.6,372.2 C1319.7,372.5 1320.7,373.5 1322.6,374.2 C1324.5,374.9 1326.8,375.9 1328.9,376.5 C1331.0,377.1 1333.2,377.6 1335.1,377.5 C1337.0,377.4 1338.2,376.4 1340.1,376.2 C1342.0,376.0 1344.3,376.2 1346.4,376.5 C1348.5,376.8 1350.4,377.6 1352.7,378.0 C1355.0,378.4 1357.3,378.9 1360.2,379.2 C1363.1,379.5 1367.1,379.3 1370.2,379.6 C1373.3,379.9 1376.5,380.7 1379.0,381.2 C1381.5,381.7 1383.1,382.7 1385.2,382.7 C1387.3,382.7 1389.4,381.8 1391.5,381.2 C1393.6,380.6 1395.7,379.9 1397.8,379.2 C1399.9,378.5 1402.1,377.5 1404.0,377.1 C1405.9,376.8 1407.3,376.6 1409.0,377.1 C1410.7,377.6 1412.6,378.6 1414.1,380.2 C1415.6,381.8 1416.6,384.4 1417.8,386.5 C1419.0,388.6 1420.2,390.0 1421.0,392.7 C1421.8,395.4 1422.3,399.9 1422.8,402.8 C1423.3,405.7 1422.9,405.5 1424.1,410.0 C1425.3,414.5 1427.7,420.0 1429.9,429.6 C1432.1,439.2 1435.5,455.0 1437.2,467.6 C1438.9,480.2 1438.9,494.3 1440.1,505.5 C1441.3,516.7 1442.8,522.0 1444.5,534.7 C1446.2,547.4 1448.6,567.4 1450.3,581.5 C1452.0,595.6 1453.2,608.2 1454.7,619.4 C1456.2,630.6 1457.1,635.5 1459.1,648.6 C1461.0,661.7 1464.0,683.1 1466.4,698.2 C1468.8,713.3 1471.7,728.9 1473.6,739.1 C1475.5,749.3 1476.3,752.8 1478.0,759.6 C1479.7,766.4 1483.0,775.9 1483.9,779.7 C1484.9,783.5 1482.9,778.2 1483.7,782.4 C1484.5,786.6 1486.8,797.9 1488.6,804.7 C1490.4,811.5 1492.7,817.5 1494.8,823.4 C1496.9,829.3 1498.8,833.6 1501.1,840.0 C1503.4,846.4 1506.0,854.5 1508.5,861.9 C1511.0,869.3 1513.5,876.8 1516.0,884.2 C1518.5,891.7 1520.7,899.2 1523.4,906.6 C1526.1,914.0 1529.0,922.1 1532.1,928.9 C1535.2,935.7 1538.7,941.4 1542.0,947.6 C1545.3,953.8 1548.5,958.6 1552.0,966.2 C1555.5,973.9 1559.5,985.2 1563.2,993.5 C1566.9,1001.8 1570.4,1008.9 1574.3,1015.9 C1578.2,1022.9 1582.2,1028.1 1586.8,1035.8 C1591.4,1043.5 1597.8,1056.2 1601.7,1061.9 C1605.6,1067.6 1607.1,1067.8 1610.4,1070.1 C1613.7,1072.4 1618.1,1073.3 1621.6,1075.5 C1625.1,1077.7 1628.2,1080.5 1631.5,1083.0 C1634.8,1085.5 1638.5,1089.2 1641.4,1090.4 C1644.3,1091.6 1645.6,1091.9 1648.9,1090.4 C1652.2,1089.0 1656.8,1084.6 1661.3,1081.7 C1665.8,1078.8 1672.1,1076.5 1676.2,1073.0 C1680.3,1069.5 1683.2,1066.0 1686.1,1060.6 C1689.0,1055.2 1691.1,1047.7 1693.6,1040.7 C1696.1,1033.7 1698.2,1027.0 1701.1,1018.4 C1704.0,1009.8 1708.6,995.7 1710.9,988.8 C1713.2,981.9 1713.6,981.3 1714.9,976.8 C1716.2,972.2 1717.6,967.3 1718.9,961.5 C1720.2,955.7 1721.6,949.4 1722.9,942.2 C1724.2,935.0 1725.6,927.6 1726.9,918.2 C1728.2,908.8 1729.8,897.0 1731.0,886.0 C1732.2,875.0 1733.0,863.9 1734.2,852.3 C1735.4,840.6 1736.9,828.1 1738.2,816.1 C1739.5,804.1 1741.1,791.4 1742.2,780.0 C1743.3,768.6 1743.6,763.9 1745.1,747.8 C1746.6,731.7 1749.2,704.8 1751.2,683.4 C1753.2,662.0 1755.4,640.5 1757.4,619.1 C1759.5,597.7 1761.2,574.6 1763.5,554.7 C1765.8,534.8 1769.1,521.0 1771.1,499.5 C1773.1,478.1 1774.2,442.9 1775.7,426.0 C1777.2,409.1 1779.1,406.1 1780.3,398.4 C1781.5,390.7 1781.7,390.4 1782.8,380.0 C1783.9,369.6 1785.6,348.3 1787.1,336.3 C1788.5,324.3 1789.8,317.7 1791.5,307.8 C1793.2,297.9 1795.5,285.9 1797.0,277.1 C1798.5,268.3 1799.0,262.5 1800.3,255.2 C1801.6,247.9 1803.1,240.6 1804.7,233.3 C1806.3,226.0 1808.5,217.1 1810.1,211.4 C1811.7,205.7 1813.0,202.8 1814.5,199.3 C1816.0,195.8 1817.1,193.4 1818.9,190.5 C1820.7,187.6 1823.0,183.9 1825.5,181.8 C1828.0,179.7 1831.7,178.5 1834.2,178.1 C1836.8,177.7 1837.9,178.1 1840.8,179.6 C1843.7,181.1 1848.1,184.0 1851.8,187.3 C1855.5,190.6 1859.4,195.1 1862.7,199.3 C1866.0,203.5 1868.6,208.1 1871.5,212.5 C1874.4,216.9 1877.4,221.4 1880.3,225.6 C1883.2,229.8 1885.3,233.3 1889.0,237.7 C1892.7,242.1 1898.2,248.6 1902.2,251.9 C1906.2,255.2 1908.8,256.4 1913.2,257.4 C1917.6,258.4 1923.8,257.3 1928.5,258.1 C1933.2,258.9 1936.8,260.4 1941.6,262.2 C1946.3,264.0 1952.6,267.7 1957.0,268.8 C1961.4,269.9 1963.9,269.4 1967.9,268.8 C1971.9,268.2 1977.1,265.9 1981.1,265.1 C1985.1,264.3 1987.7,263.6 1992.1,264.0 C1996.5,264.4 2001.9,265.5 2007.4,267.3 C2012.9,269.1 2019.8,272.7 2024.9,274.9 C2030.0,277.1 2034.3,278.9 2038.1,280.4 C2041.9,281.9 2045.9,283.1 2047.5,283.7" stroke="#ff0000"/>
</g>
<rect x="779.5" y="137.5" width="1268.0" height="1042.0" fill="none" stroke="#000" stroke-width="1.6"/>
<rect x="969.6" y="1272" width="814" height="42" fill="#fff" stroke="#000" stroke-width="1.8"/>
<rect x="975.4" y="1291.3" width="30.1" height="2" fill="#ff0000"/>
<rect x="1165.5" y="1291.3" width="29.7" height="2" fill="#0000ff"/>
<rect x="1341.3" y="1291.3" width="29.7" height="2" fill="#ff00ff"/>
<rect x="1570.8" y="1291.3" width="29.9" height="2" fill="#00ffff"/>
<text x="1012.20" y="1301.8" font-size="24.6" fill="#3a3a3a" textLength="141.12" lengthAdjust="spacingAndGlyphs">Att:ATT.Pitch</text>
<text x="1202.50" y="1301.8" font-size="24.6" fill="#3a3a3a" textLength="128.00" lengthAdjust="spacingAndGlyphs">Att:ATT.Roll</text>
<text x="1376.75" y="1301.8" font-size="24.6" fill="#3a3a3a" textLength="182.99" lengthAdjust="spacingAndGlyphs">SP:ATSP.PitchSP</text>
<text x="1607.27" y="1301.8" font-size="24.6" fill="#3a3a3a" textLength="168.36" lengthAdjust="spacingAndGlyphs">SP:ATSP.RollSP</text>
</svg></body></html>
